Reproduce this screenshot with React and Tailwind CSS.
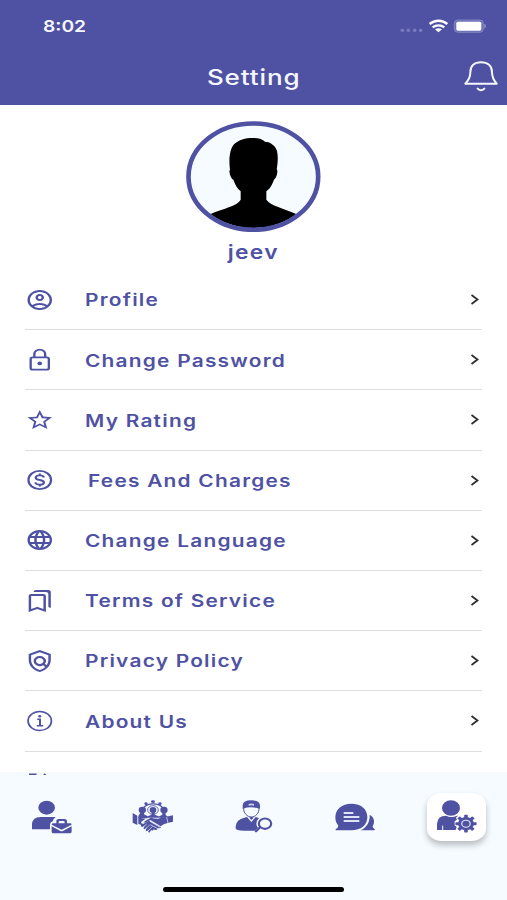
import React from "react";
import {
  MdOutlineAccountCircle,
  MdStarOutline,
  MdLanguage,
  MdOutlineBookmarks,
  MdOutlinePolicy,
} from "react-icons/md";

const LockIcon = (props) => (
  <svg viewBox="0 0 24 24" fill="none" stroke="currentColor" strokeWidth="1.9" {...props}>
    <rect x="4.6" y="9.4" width="14.800" height="12.200" rx="1.600" />
    <path d="M7.600 9.400V6a4.400 4.400 0 0 1 8.800 0v3.400" />
    <circle cx="12" cy="15.400" r="1.900" fill="currentColor" stroke="none" />
  </svg>
);

const DollarIcon = (props) => (
  <svg viewBox="0 0 24 24" fill="none" stroke="currentColor" strokeWidth="1.800" {...props}>
    <circle cx="12" cy="12" r="9.200" />
    <path d="M15.400 9.400C15 8 13.800 7.400 12 7.400C10 7.400 8.700 8.300 8.700 9.700C8.700 11.300 10.200 11.600 12 12C13.900 12.400 15.400 12.800 15.400 14.400C15.400 15.800 14 16.600 12 16.600C10.100 16.600 8.700 15.900 8.400 14.300M12 5.600V7.400M12 16.600V18.400" />
  </svg>
);

const InfoIcon = (props) => (
  <svg viewBox="0 0 24 24" fill="none" stroke="currentColor" strokeWidth="1.400" {...props}>
    <circle cx="12" cy="12" r="9.500" />
    <path d="M10 10.300H12.200V16.600M9.600 16.800H14.800" strokeWidth="1.600" />
    <circle cx="12" cy="7.300" r="1.200" fill="currentColor" stroke="none" />
  </svg>
);

const rows = [
  { label: "Profile", Icon: MdOutlineAccountCircle },
  { label: "Change Password", Icon: LockIcon },
  { label: "My Rating", Icon: MdStarOutline },
  { label: "Fees And Charges", Icon: DollarIcon, indent: true },
  { label: "Change Language", Icon: MdLanguage },
  { label: "Terms of Service", Icon: MdOutlineBookmarks },
  { label: "Privacy Policy", Icon: MdOutlinePolicy },
  { label: "About Us", Icon: InfoIcon },
];

function StatusIcons() {
  return (
    <svg className="h-[14px] w-[87.3px]" viewBox="440 56 262 42" preserveAspectRatio="none">
      <g fill="#777abd">
        <circle cx="447" cy="90" r="5.5" />
        <circle cx="465" cy="90" r="5.5" />
        <circle cx="484" cy="90" r="5.5" />
        <circle cx="502" cy="90" r="5.5" />
      </g>
      <g fill="none" stroke="#fff" strokeWidth="7">
        <path d="M529 71C544 58 567 58 582 71" />
        <path d="M538 81C548 73 563 73 573 81" />
      </g>
      <path d="M545 87Q555.500 80 566 87L555.500 96Z" fill="#fff" />
      <rect x="603" y="59" width="87" height="37" rx="10" fill="#6d70b5" stroke="#7f83c3" strokeWidth="3" />
      <rect x="609" y="64" width="75" height="27" rx="5" fill="#fff" />
      <path d="M694 71Q700 77.500 694 84Z" fill="#8b8fc9" stroke="#8b8fc9" strokeWidth="2" />
    </svg>
  );
}

function Bell() {
  return (
    <svg className="h-[31.300px] w-[34px]" viewBox="632 184 102 94" fill="none" stroke="#f5f7ff" strokeWidth="6" strokeLinejoin="round" strokeLinecap="round" preserveAspectRatio="none">
      <path d="M636 252C648 240 651 232 651 218C651 198 664 188 683 188C702 188 716 198 716 218C716 232 719 240 730 252Z" />
      <path d="M673 267Q683 277 693 267" />
    </svg>
  );
}

function Avatar() {
  return (
    <svg className="h-[111.300px] w-[134.700px]" viewBox="50 32 404 334" preserveAspectRatio="none">
      <defs>
        <clipPath id="face">
          <ellipse cx="252" cy="199" rx="188" ry="154" />
        </clipPath>
      </defs>
      <ellipse cx="252" cy="199" rx="194" ry="159" fill="#f5fbff" />
      <path
        clipPath="url(#face)"
        d="M182 178C178 150 180 118 194 102C208 88 228 83 250 83C268 83 280 87 287 94C300 94 318 104 323 122C327 140 325 160 322 177C327 181 322 204 314 208C309 222 303 234 291 243V268C302 286 345 294 382 312L400 380H104L122 312C160 294 204 288 214 268V243C203 234 197 222 192 208C184 205 177 182 182 178Z"
      />
      <ellipse cx="252" cy="199" rx="194.500" ry="159.500" fill="none" stroke="#4f52a3" strokeWidth="14" />
    </svg>
  );
}

function WorkerIcon() {
  return (
    <svg className="ml-[1.500px] h-[34px] w-[41.300px]" viewBox="93 104 124 102" fill="#4f52a3" preserveAspectRatio="none">
      <ellipse cx="140" cy="127" rx="25" ry="21" />
      <path d="M96 192V179Q96 155 122 155H167Q160 160 158 168Q150 171 150 178V192Z" />
      <path d="M155 178Q155 174 160 174H169V168Q169 161 177 161H193Q201 161 201 168V174H210Q215 174 215 178L185 193Z" />
      <path d="M176 174V170Q176 167 180 167H190Q194 167 194 170V174Z" fill="#f5fbff" />
      <path d="M155 183L180 196Q185 199 190 196L215 183V199Q215 204 209 204H161Q155 204 155 199Z" />
    </svg>
  );
}

function PartnersIcon() {
  return (
    <svg className="ml-px h-[33.300px] w-[41.300px]" viewBox="35 45 124 100" fill="#4f52a3" preserveAspectRatio="none">
      <path d="M69 69A34 25 0 0 1 128 69" fill="none" stroke="#4f52a3" strokeWidth="4" />
      <ellipse cx="98" cy="50" rx="6" ry="4" />
      <ellipse cx="77" cy="56" rx="5" ry="4" />
      <ellipse cx="119" cy="56" rx="5" ry="4" />
      <ellipse cx="66" cy="75" rx="11" ry="10" />
      <ellipse cx="131" cy="75" rx="11" ry="10" />
      <path d="M61 82H71V88L82 94V100H54V93Z" />
      <path d="M126 82H136V90L143 95L123 100L114 95L126 89Z" />
      <ellipse cx="98" cy="75" rx="16" ry="13" fill="none" stroke="#4f52a3" strokeWidth="2.500" />
      <ellipse cx="98" cy="75" rx="10" ry="9" />
      <path d="M94 81H103V89L118 95V98H78V95L94 89Z" />
      <path d="M37 84L51 92V120L37 113Z" />
      <path d="M54 96Q64 101 76 101L62 111Q62 118 70 116L86 107L105 118L122 127Q120 132 112 129L110 134Q104 137 100 133Q99 139 93 135L87 143Q81 140 86 134L79 139Q73 136 80 128L72 133Q67 129 74 122L66 126Q60 124 62 119L54 117Z" />
      <path d="M78 106L92 98Q101 101 112 101L158 91V110L142 114Q129 117 121 124L110 117L90 105L75 113L70 112Z" />
      <path d="M68 127L79 117M74 133L88 120M82 139L96 125M90 119L112 131M139 96L143 114M89 109L119 127" fill="none" stroke="#f5fbff" strokeWidth="2" />
    </svg>
  );
}

function SearchWorkerIcon() {
  return (
    <svg className="ml-px h-[33.300px] w-[38px]" viewBox="345 45 114 100" fill="#4f52a3" preserveAspectRatio="none">
      <path d="M368 71V61Q369 46 394 46Q419 46 420 61V71Q394 63 368 71Z" />
      <path d="M386 57Q394 54 402 57V62Q394 60 386 62Z" fill="#cdd1eb" />
      <path d="M371 68C370 86 383 96 394 96C406 96 418 86 417 68" fill="none" stroke="#4f52a3" strokeWidth="3" />
      <path d="M347 130V124Q349 103 373 98L381 96L394 111L407 96L417 99Q409 107 409 117Q410 125 414 128L405 137H372Q347 137 347 130Z" />
      <path d="M388 98L394 105L401 98L397 96H391Z" />
      <path d="M421 126L408 139" stroke="#4f52a3" strokeWidth="7" strokeLinecap="round" />
      <ellipse cx="435" cy="116" rx="18.500" ry="15.500" fill="#f5fbff" stroke="#4f52a3" strokeWidth="6.500" />
    </svg>
  );
}

function ChatIcon() {
  return (
    <svg className="ml-px h-[28px] w-[40.700px]" viewBox="46 68 122 84" fill="#4f52a3" preserveAspectRatio="none">
      <path d="M48 150V146Q56 143 56 136Q47 126 47 111C47 86 67 70 95 70C124 70 143 86 143 110C143 134 124 150 95 150Z" />
      <path d="M150 103C166 111 165 129 159 137Q158 143 165 146V150H123C141 141 151 125 150 103Z" />
      <path d="M72 98H101M72 110H119M72 122H119" stroke="#dfe4fa" strokeWidth="5.500" />
    </svg>
  );
}

const teeth = [0, 45, 90, 135, 180, 225, 270, 315];

function UserSettingsIcon() {
  return (
    <svg className="h-[33.300px] w-[41.300px]" viewBox="346 60 124 100" fill="#4f52a3" preserveAspectRatio="none">
      <ellipse cx="391" cy="84" rx="27" ry="23" />
      <path d="M349 150V132Q350 107 376 107Q392 115 409 107H412L406 113L409 119L402 124V136L408 141L405 150H378V150Z" />
      <path d="M366 137V150" stroke="#fff" strokeWidth="3" />
      <g transform="translate(436 131) scale(1.2 1)">
        <circle r="20" />
        {teeth.map((a) => (
          <rect key={a} x="-4.500" y="-26.500" width="9" height="10" rx="2" transform={`rotate(${a})`} />
        ))}
        <circle r="10.500" fill="none" stroke="#e4e6f6" strokeWidth="3" />
      </g>
    </svg>
  );
}

export default function App() {
  return (
    <div className="flex h-[900px] w-[507px] flex-col overflow-hidden bg-white font-['Inter',sans-serif] text-[#4f52a3]">
      <header className="h-[105px] shrink-0 bg-[#4f52a3] text-[#f5f7ff]">
        <div className="flex h-[52px] items-center justify-between pr-[20px] pl-[43px]">
          <span className="origin-left scale-x-[1.2] text-[16px] font-semibold">8:02</span>
          <StatusIcons />
        </div>
        <div className="grid h-[50px] grid-cols-[1fr_auto_1fr] items-center pr-[9px]">
          <span />
          <h1 className="scale-x-[1.240] pt-[2px] pl-[8px] text-[21px] font-medium tracking-[0.700px]">Setting</h1>
          <div className="flex justify-end">
            <Bell />
          </div>
        </div>
      </header>

      <main className="relative z-10 flex h-[670px] shrink-0 flex-col overflow-hidden">
        <div className="flex h-[165px] shrink-0 flex-col items-center pt-[16px]">
          <Avatar />
          <p className="mt-[6.500px] scale-x-[1.200] text-[19px] leading-[28px] font-semibold tracking-[1.100px]">jeev</p>
        </div>
        <ul className="mr-[25px] ml-[25px] shrink-0">
          {rows.map(({ label, Icon, indent }) => (
            <li key={label} className="flex h-[60.200px] items-center border-b-[1.500px] border-[#dedede]">
              <Icon preserveAspectRatio="none" className="h-[24px] w-[29.500px] shrink-0" />
              <span className={`${indent ? "ml-[33.500px]" : "ml-[30.500px]"} origin-left scale-x-[1.228] pt-[3px] text-[17px] font-semibold tracking-[1px] whitespace-nowrap`}>
                {label}
              </span>
              <svg className="mr-[3px] ml-auto h-[11px] w-[9px]" viewBox="0 0 9 11" fill="none" stroke="#303030" strokeWidth="1.800">
                <path d="M1.500 1L7.500 5.500L1.500 10" />
              </svg>
            </li>
          ))}
        </ul>
        <svg className="mt-[21px] ml-[29px] h-[24px] w-[22px] shrink-0" viewBox="0 0 22 24" fill="none" stroke="currentColor" strokeWidth="2">
          <path d="M7.500 1.500H1V22H7.500M15 1L18 4L21 8H6" />
        </svg>
      </main>

      <nav className="-mt-[3px] h-[128px] shrink-0 bg-[#f5fbff]">
        <div className="grid h-[90px] grid-cols-5 items-center justify-items-center">
          <WorkerIcon />
          <PartnersIcon />
          <SearchWorkerIcon />
          <ChatIcon />
          <div className="flex h-[48.500px] w-[59px] items-center justify-center rounded-[15px/12px] bg-white shadow-[0_4px_6px_rgba(0,0,0,0.25)]">
            <UserSettingsIcon />
          </div>
        </div>
        <div className="mx-auto mt-[25px] h-[5px] w-[181px] rounded-full bg-black" />
      </nav>
    </div>
  );
}
